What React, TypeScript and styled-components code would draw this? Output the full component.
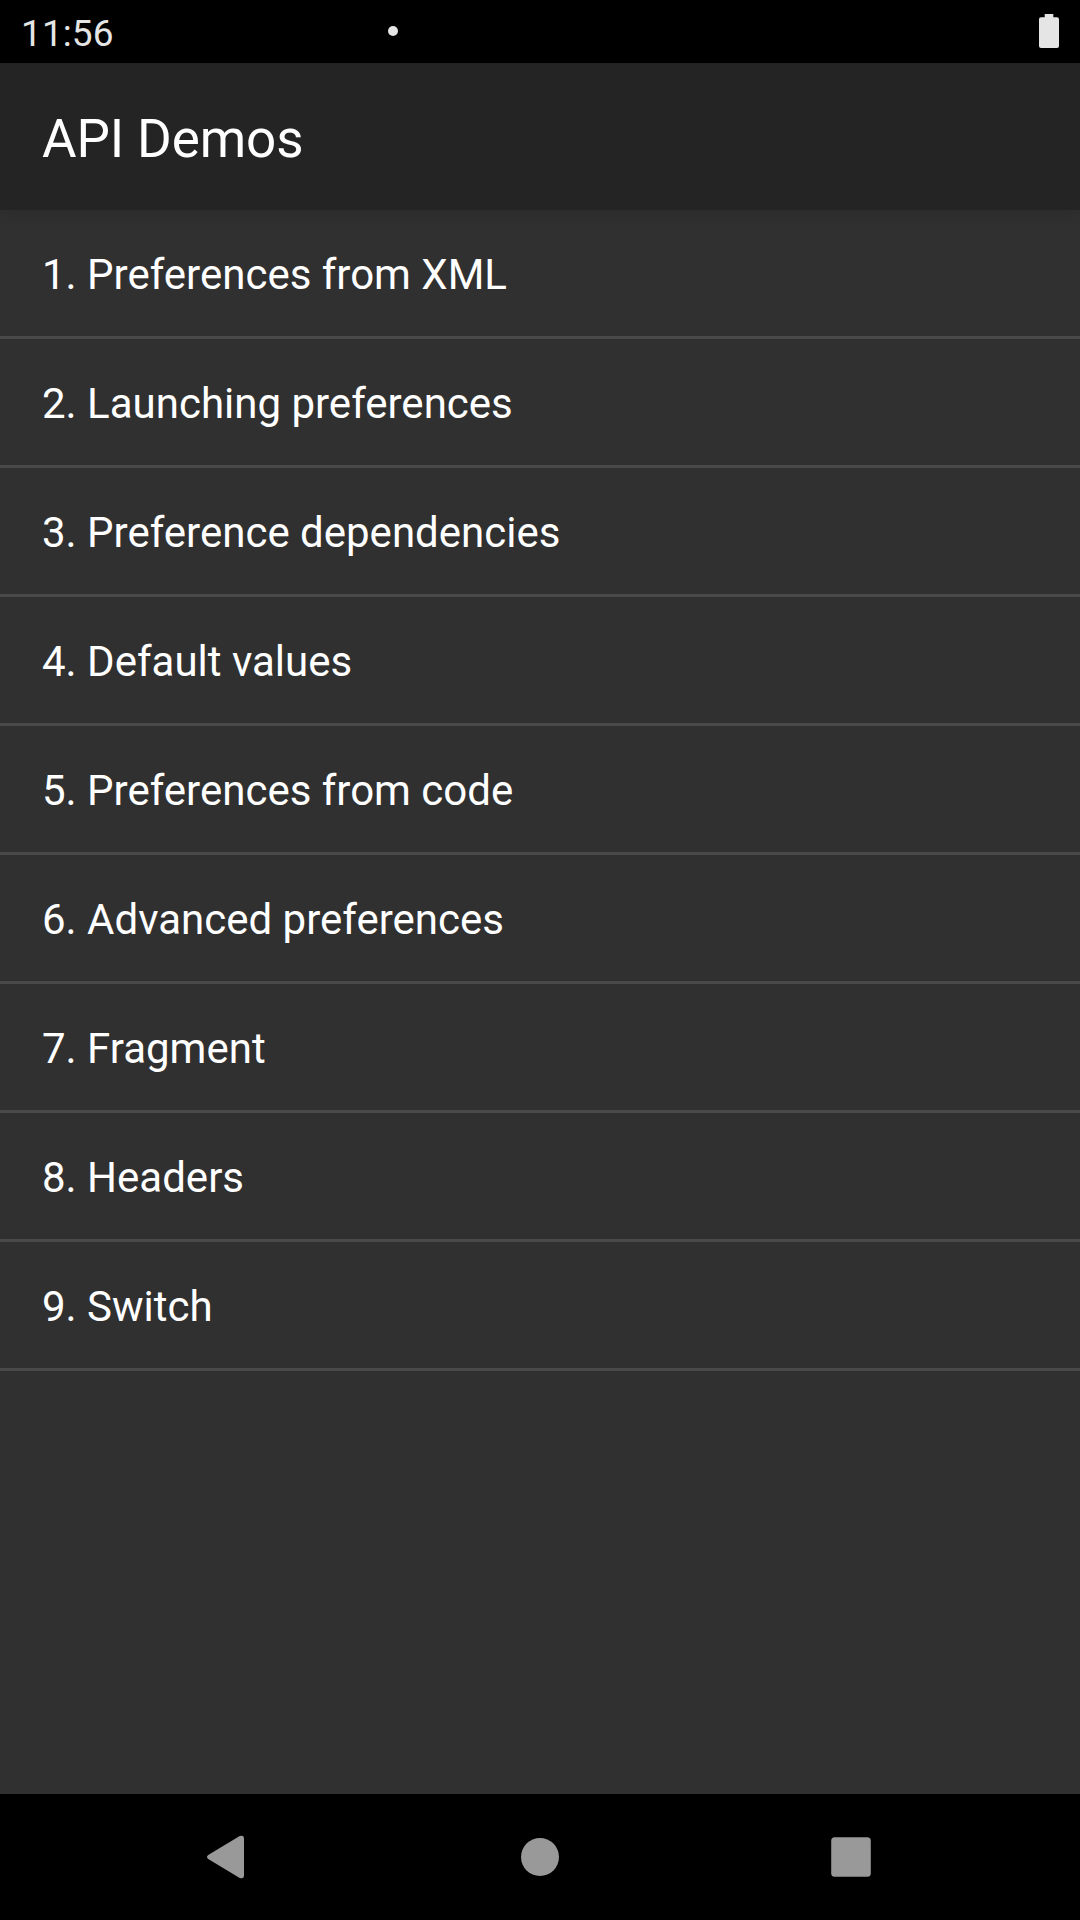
import React from "react";
import styled, { createGlobalStyle } from "styled-components";

const GlobalStyle = createGlobalStyle`
  * { box-sizing: border-box; }
  body { margin: 0; background: #303030; font-family: Roboto, sans-serif; }
`;
const Screen = styled.div`
  width: 1080px; height: 1920px; display: flex; flex-direction: column;
  background: #303030; color: #fff; overflow: hidden;
`;
const StatusBar = styled.header`
  height: 63px; flex: none; background: #000; display: flex; align-items: center;
  padding: 0 21px 1px 21px;
`;
const Clock = styled.time`
  width: 367px; font-size: 37px; line-height: 43px; color: #e5e5e5; padding-top: 5px;
  letter-spacing: 0.1px;
`;
const Dot = styled.span`
  width: 10px; height: 10px; border-radius: 50%; background: #e5e5e5;
`;
const Battery = styled.svg`
  margin-left: auto; width: 20px; height: 34px; display: block;
`;
const AppBar = styled.div`
  height: 147px; flex: none; background: #242424; display: flex; align-items: center;
  padding: 5px 42px 0; box-shadow: 0 4px 12px rgba(0, 0, 0, 0.1);
`;
const Title = styled.h1`
  margin: 0; font-size: 53px; line-height: 62px; font-weight: 400; letter-spacing: -0.12px;
`;
const List = styled.ul`
  margin: 0; padding: 0; list-style: none; flex: 1;
`;
const Row = styled.li`
  height: 129px; border-bottom: 3px solid #494949; padding: 3px 42px 0;
  display: flex; align-items: center; font-size: 42px; line-height: 49px;
`;
const NavBar = styled.nav`
  height: 126px; flex: none; background: #000; display: flex; justify-content: center;
`;
const NavButton = styled.button`
  width: 312px; height: 126px; padding: 0; border: 0; background: none;
  svg { display: block; width: 312px; height: 126px; fill: #999; }
`;

const items = [
  "1. Preferences from XML", "2. Launching preferences", "3. Preference dependencies",
  "4. Default values", "5. Preferences from code", "6. Advanced preferences",
  "7. Fragment", "8. Headers", "9. Switch",
];

export default function App() {
  return (
    <Screen>
      <GlobalStyle />
      <StatusBar>
        <Clock>11:56</Clock>
        <Dot />
        <Battery viewBox="0 0 20 34"><path fill="#e5e5e5" d="M5.7 0h8.6v3.3H18q2 0 2 2V32q0 2-2 2H2q-2 0-2-2V5.3q0-2 2-2h3.7z" /></Battery>
      </StatusBar>
      <AppBar><Title>API Demos</Title></AppBar>
      <List>{items.map((item) => <Row key={item}>{item}</Row>)}</List>
      <NavBar>
        <NavButton aria-label="Back"><svg viewBox="0 0 312 126"><path d="M136.2 61L167.7 42.1Q172 40.7 172 44.7V81.3Q172 85.3 167.7 83.9L136.2 65Q133.8 63 136.2 61Z" /></svg></NavButton>
        <NavButton aria-label="Home"><svg viewBox="0 0 312 126"><circle cx="156" cy="63" r="19" /></svg></NavButton>
        <NavButton aria-label="Overview"><svg viewBox="0 0 312 126"><rect x="135.2" y="43.2" width="39.6" height="39.6" rx="3.5" /></svg></NavButton>
      </NavBar>
    </Screen>
  );
}
